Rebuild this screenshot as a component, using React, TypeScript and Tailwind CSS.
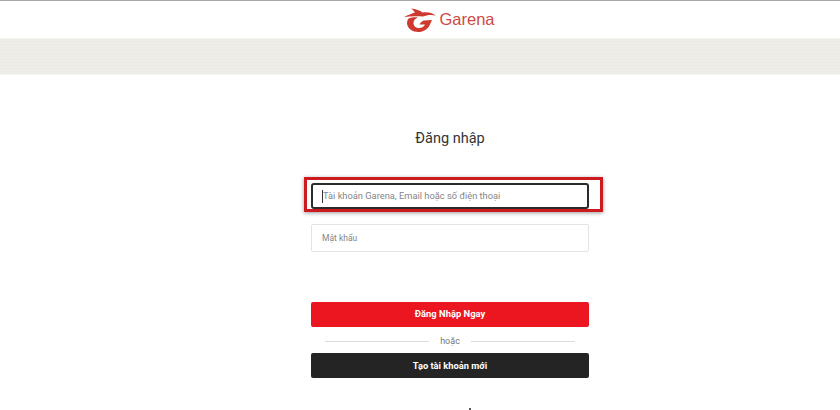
import React from "react";

const font = { fontFamily: "Roboto, 'Liberation Sans', sans-serif" };

function GarenaMark() {
  return (
    <svg width="32" height="24" viewBox="0 0 32 24" fill="#cf3a30">
      {/* top wing */}
      <path d="M0 9 C4 7 8 5.5 11 4.5 C10 3 8.5 1.5 7 0.5 C12 1 16 2.5 18.5 4.5 C23 3.5 28 4.5 32 7.5 C27 6.5 22.5 7 19 8.5 C13 8 6 8 0 9 Z" />
      {/* G body */}
      <path d="M4 11 C6 9.5 10 9 14 9.5 C11 10.5 9.5 12.5 9.5 15 C9.5 18 12 20 15 20 C18 20 20 18.5 21 16.5 L15.5 16.5 C16.5 14.5 18 13 20 12.5 L28 12 C27 14 26.5 15.5 25.5 17.5 C23.5 21.5 19 24 14.5 24 C8.5 24 3.5 20.5 3 15.5 C3 14 3.3 12.5 4 11 Z" />
    </svg>
  );
}

export default function App() {
  return (
    <div className="w-[840px] h-[410px] overflow-hidden bg-white flex flex-col relative" style={font}>
      <header className="h-[38px] shrink-0 border-t border-[#a8a8a8] flex items-center justify-center gap-[3px] pl-[59px]">
        <GarenaMark />
        <span className="text-[16.5px] leading-none text-[#cf4a42] font-['Liberation_Sans',sans-serif]">
          Garena
        </span>
      </header>
      <div className="h-[37px] shrink-0 border-y border-[#f2f2ee] bg-[repeating-linear-gradient(0deg,#eeede8_0px,#eeede8_2px,#ebeae5_2px,#ebeae5_3px)]" />

      <main className="ml-[311px] w-[278px] flex flex-col">
        <h1 className="mt-[54px] text-center text-[14.5px] leading-[20px] text-[#333]">Đăng nhập</h1>

        <div className="relative mt-[34px] h-[26px] border-2 border-[#2b2b2b] rounded-[3px] bg-white flex items-center pl-[9px]">
          <span className="w-px h-[13px] bg-[#333]" />
          <span className="text-[9.3px] text-[#858585]">Tài khoản Garena, Email hoặc số điện thoại</span>
          {/* annotation frame drawn over the screenshot */}
          <div className="absolute left-[-9px] top-[-8px] w-[299px] h-[35px] border-[3px] border-[#cc1a1f] shadow-[0_1px_4px_rgba(0,0,0,0.4)]" />
        </div>

        <div className="mt-[15px] h-[28px] border border-[#e3e3e3] rounded-[2px] flex items-center pl-[10px]">
          <span className="text-[8.5px] text-[#858585]">Mật khẩu</span>
        </div>

        <button className="mt-[50px] h-[25px] bg-[#ec1620] rounded-[2px] text-white text-[9.4px] font-bold">
          Đăng Nhập Ngay
        </button>

        <div className="mt-[8px] mx-[14px] flex items-center gap-[11px]">
          <span className="flex-1 h-px bg-[#dcdcdc]" />
          <span className="text-[9px] leading-[12px] text-[#777]">hoặc</span>
          <span className="flex-1 h-px bg-[#dcdcdc]" />
        </div>

        <button className="mt-[6px] h-[25px] bg-[#242424] rounded-[2px] text-white text-[9.3px] font-bold">
          Tạo tài khoản mới
        </button>
      </main>
      <span className="absolute left-[469px] top-[408px] w-[2px] h-[2px] bg-[#555]" />
    </div>
  );
}
